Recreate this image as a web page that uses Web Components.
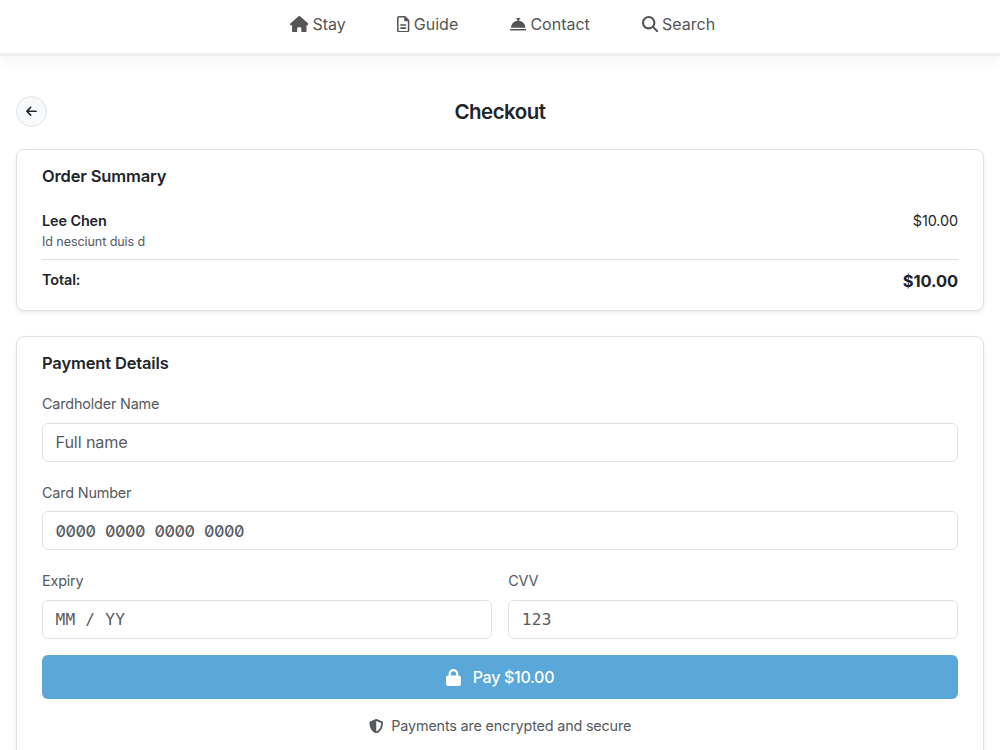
<!DOCTYPE html>
<html lang="en">
<head>
<meta charset="utf-8">
<title>Checkout</title>
<style>
  body {
    margin: 0;
    height: 750px;
    overflow: hidden;
    background: #fff;
    color: #212529;
    font-family: Inter, "Liberation Sans", sans-serif;
    font-size: 16px;
  }
</style>
</head>
<body>
<checkout-page></checkout-page>

<script>
const ICONS = {
  house: ['0 0 576 512', 'M575.8 255.5c0 18-15 32.1-32 32.1h-32l.7 160.2c0 2.7-.2 5.4-.5 8.1V472c0 22.1-17.9 40-40 40H456c-1.1 0-2.2 0-3.3-.1c-1.4 .1-2.8 .1-4.2 .1H416 392c-22.1 0-40-17.9-40-40V448 384c0-17.7-14.3-32-32-32H256c-17.7 0-32 14.3-32 32v64 24c0 22.1-17.9 40-40 40H160 128.1c-1.5 0-3-.1-4.5-.2c-1.2 .1-2.4 .2-3.6 .2H104c-22.1 0-40-17.9-40-40V360c0-.9 0-1.9 .1-2.8V287.6H32c-18 0-32-14-32-32.1c0-9 3-17 10-24L266.4 8c7-7 15-8 22-8s15 2 21 7L564.8 231.5c8 7 12 15 11 24z'],
  file: ['0 0 384 512', 'M64 464c-8.8 0-16-7.2-16-16V64c0-8.8 7.2-16 16-16H224v80c0 17.7 14.3 32 32 32h80V448c0 8.8-7.2 16-16 16H64zM64 0C28.7 0 0 28.7 0 64V448c0 35.3 28.7 64 64 64H320c35.3 0 64-28.7 64-64V154.5c0-17-6.7-33.3-18.7-45.3L274.7 18.7C262.7 6.7 246.5 0 229.5 0H64zm56 256c-13.3 0-24 10.7-24 24s10.7 24 24 24H264c13.3 0 24-10.7 24-24s-10.7-24-24-24H120zm0 96c-13.3 0-24 10.7-24 24s10.7 24 24 24H264c13.3 0 24-10.7 24-24s-10.7-24-24-24H120z'],
  bell: ['0 0 512 512', 'M216 64c-13.3 0-24 10.7-24 24s10.7 24 24 24h16v33.3C119.6 157.2 32 252.4 32 368H480c0-115.6-87.6-210.8-200-222.7V112h16c13.3 0 24-10.7 24-24s-10.7-24-24-24H256 216zM24 400c-13.3 0-24 10.7-24 24s10.7 24 24 24H488c13.3 0 24-10.7 24-24s-10.7-24-24-24H24z'],
  search: ['0 0 512 512', 'M416 208c0 45.9-14.9 88.3-40 122.7L502.6 457.4c12.5 12.5 12.5 32.8 0 45.3s-32.8 12.5-45.3 0L330.7 376c-34.4 25.2-76.8 40-122.7 40C93.1 416 0 322.9 0 208S93.1 0 208 0S416 93.1 416 208zM208 352a144 144 0 1 0 0-288 144 144 0 1 0 0 288z'],
  back: ['0 0 448 512', 'M9.4 233.4c-12.5 12.5-12.5 32.8 0 45.3l160 160c12.5 12.5 32.8 12.5 45.3 0s12.5-32.8 0-45.3L109.2 288 416 288c17.7 0 32-14.3 32-32s-14.3-32-32-32l-306.7 0L214.6 118.6c12.5-12.5 12.5-32.8 0-45.3s-32.8-12.5-45.3 0l-160 160z'],
  lock: ['0 0 448 512', 'M144 144v48H304V144c0-44.2-35.8-80-80-80s-80 35.8-80 80zM80 192V144C80 64.5 144.5 0 224 0s144 64.5 144 144v48h16c35.3 0 64 28.7 64 64V448c0 35.3-28.7 64-64 64H64c-35.3 0-64-28.7-64-64V256c0-35.3 28.7-64 64-64H80z'],
  shield: ['0 0 512 512', 'M256 0c4.6 0 9.2 1 13.4 2.9L457.7 82.8c22 9.3 38.4 31 38.3 57.2c-.5 99.2-41.3 280.7-213.6 363.2c-16.7 8-36.1 8-52.8 0C57.3 420.7 16.5 239.2 16 140c-.1-26.2 16.3-47.9 38.3-57.2L242.7 2.9C246.8 1 251.4 0 256 0zm0 66.8V444.8C394 378 431.1 230.1 432 141.4L256 66.8l0 0z']
};

// <ui-icon name="..."> takes its height from --icon-size
class UiIcon extends HTMLElement {
  constructor() {
    super();
    this.attachShadow({ mode: 'open' });
  }
  connectedCallback() {
    const [viewBox, path] = ICONS[this.getAttribute('name')];
    this.shadowRoot.innerHTML = `
      <style>
        :host { display: inline-flex; flex: none; }
        svg { height: var(--icon-size, 16px); fill: currentColor; display: block; }
      </style>
      <svg viewBox="${viewBox}" aria-hidden="true"><path d="${path}"/></svg>
    `;
  }
}

class NavItem extends HTMLElement {
  constructor() {
    super();
    this.attachShadow({ mode: 'open' });
  }
  connectedCallback() {
    this.shadowRoot.innerHTML = `
      <style>
        :host { display: block; --icon-size: 16.5px; }
        a { display: flex; align-items: center; gap: 4px; line-height: 24px; color: #555; text-decoration: none; }
      </style>
      <a href="#"><ui-icon name="${this.getAttribute('icon')}"></ui-icon><slot></slot></a>
    `;
  }
}

class SiteNav extends HTMLElement {
  constructor() {
    super();
    this.attachShadow({ mode: 'open' });
    this.shadowRoot.innerHTML = `
      <style>
        :host {
          display: block;
          height: 53px;
          border-bottom: 3px solid #eeeff1;
          box-shadow: 0 4px 16px rgba(0, 0, 0, 0.05);
        }
        nav {
          display: flex;
          justify-content: center;
          gap: 51.7px;
          padding: 12px 0 0 5px;
        }
      </style>
      <nav>
        <nav-item icon="house">Stay</nav-item>
        <nav-item icon="file">Guide</nav-item>
        <nav-item icon="bell">Contact</nav-item>
        <nav-item icon="search">Search</nav-item>
      </nav>
    `;
  }
}

class PanelCard extends HTMLElement {
  constructor() {
    super();
    this.attachShadow({ mode: 'open' });
  }
  connectedCallback() {
    this.shadowRoot.innerHTML = `
      <style>
        :host {
          display: block;
          box-sizing: border-box;
          border: 1px solid #dfe2e6;
          border-radius: 8px;
          padding: 15px 25px 0;
          background: #fff;
          box-shadow: 0 2px 4px rgba(0, 0, 0, 0.075);
        }
        h2 { margin: 0; font-size: 16.5px; font-weight: 600; line-height: 22px; letter-spacing: -0.15px; }
      </style>
      <h2>${this.getAttribute('heading')}</h2>
      <slot></slot>
    `;
  }
}

class OrderSummary extends HTMLElement {
  constructor() {
    super();
    this.attachShadow({ mode: 'open' });
    this.shadowRoot.innerHTML = `
      <style>
        :host { display: block; padding-top: 23px; font-size: 14.4px; line-height: 22px; letter-spacing: -0.1px; }
        .row { display: flex; justify-content: space-between; }
        .name { font-weight: 600; }
        .desc { font-size: 12.6px; line-height: 19px; color: #555a5f; }
        .total { border-top: 1px solid #dee2e6; margin-top: 8px; padding-top: 9px; }
        .total b { font-size: 16.5px; font-weight: 700; line-height: 24px; }
      </style>
      <div class="row">
        <div>
          <div class="name">Lee Chen</div>
          <div class="desc">Id nesciunt duis d</div>
        </div>
        <div class="price">$10.00</div>
      </div>
      <div class="row total"><span class="name">Total:</span><b>$10.00</b></div>
    `;
  }
}

class FormField extends HTMLElement {
  constructor() {
    super();
    this.attachShadow({ mode: 'open' });
  }
  connectedCallback() {
    this.shadowRoot.innerHTML = `
      <style>
        :host { display: block; flex: 1; font-size: 14.4px; }
        label { display: block; line-height: 21px; margin-bottom: 8.5px; color: #555a5f; letter-spacing: -0.17px; }
        input {
          display: block;
          box-sizing: border-box;
          width: 100%;
          height: 39px;
          padding: 0 12.5px;
          border: 1px solid #dee2e6;
          border-radius: 6px;
          background: #fff;
          font: 16.2px Inter, "Liberation Sans", sans-serif;
          letter-spacing: -0.12px;
        }
        input::placeholder { color: #595c5f; opacity: 1; }
        :host([kind="digits"]) input {
          font-weight: 500;
          font-feature-settings: "zero", "tnum";
          letter-spacing: -0.5px;
          word-spacing: 5.7px;
        }
        :host([kind="mono"]) input { font-family: "DejaVu Sans Mono", monospace; letter-spacing: 0.2px; }
      </style>
      <label for="field">${this.getAttribute('label')}</label>
      <input id="field" placeholder="${this.getAttribute('hint')}">
    `;
  }
}

class PaymentForm extends HTMLElement {
  constructor() {
    super();
    this.attachShadow({ mode: 'open' });
    this.shadowRoot.innerHTML = `
      <style>
        :host { display: flex; flex-direction: column; gap: 20px; padding-top: 19.1px; }
        .pair { display: flex; gap: 16.5px; }
        button {
          display: flex;
          align-items: center;
          justify-content: center;
          gap: 12px;
          height: 43.5px;
          margin-top: -3.3px;
          border: 0;
          border-radius: 6px;
          background: #5aa7d9;
          color: #fff;
          font: 500 16px Inter, "Liberation Sans", sans-serif;
          letter-spacing: -0.3px;
          --icon-size: 17px;
        }
        .note {
          --icon-size: 14.5px;
          display: flex;
          align-items: center;
          justify-content: center;
          gap: 8px;
          margin-top: -4px;
          font-size: 14.4px;
          line-height: 22px;
          letter-spacing: -0.18px;
          color: #555a5f;
        }
      </style>
      <form-field label="Cardholder Name" hint="Full name"></form-field>
      <form-field label="Card Number" hint="0000 0000 0000 0000" kind="digits"></form-field>
      <div class="pair">
        <form-field label="Expiry" hint="MM / YY" kind="mono"></form-field>
        <form-field label="CVV" hint="123" kind="mono"></form-field>
      </div>
      <button type="button"><ui-icon name="lock"></ui-icon><span>Pay $10.00</span></button>
      <div class="note"><ui-icon name="shield"></ui-icon><span>Payments are encrypted and secure</span></div>
    `;
  }
}

class CheckoutPage extends HTMLElement {
  constructor() {
    super();
    this.attachShadow({ mode: 'open' });
    this.shadowRoot.innerHTML = `
      <style>
        :host { display: block; }
        main { padding: 40px 16px 0; }
        .top { display: grid; grid-template-columns: 31px 1fr 31px; align-items: center; }
        h1 { margin: 0; text-align: center; font-size: 20.5px; font-weight: 600; line-height: 30px; letter-spacing: -0.5px; }
        .back {
          --icon-size: 12.5px;
          display: grid;
          place-items: center;
          width: 31px;
          height: 31px;
          padding: 0;
          border: 1px solid #dee2e6;
          border-radius: 50%;
          background: #f8f9fa;
          color: #212529;
        }
        .order { height: 162px; margin-top: 22px; }
        .payment { height: 440px; margin-top: 25px; }
      </style>
      <site-nav></site-nav>
      <main>
        <div class="top">
          <button class="back" aria-label="Back"><ui-icon name="back"></ui-icon></button>
          <h1>Checkout</h1>
        </div>
        <panel-card class="order" heading="Order Summary"><order-summary></order-summary></panel-card>
        <panel-card class="payment" heading="Payment Details"><payment-form></payment-form></panel-card>
      </main>
    `;
  }
}

customElements.define('ui-icon', UiIcon);
customElements.define('nav-item', NavItem);
customElements.define('site-nav', SiteNav);
customElements.define('panel-card', PanelCard);
customElements.define('order-summary', OrderSummary);
customElements.define('form-field', FormField);
customElements.define('payment-form', PaymentForm);
customElements.define('checkout-page', CheckoutPage);
</script>
</body>
</html>
